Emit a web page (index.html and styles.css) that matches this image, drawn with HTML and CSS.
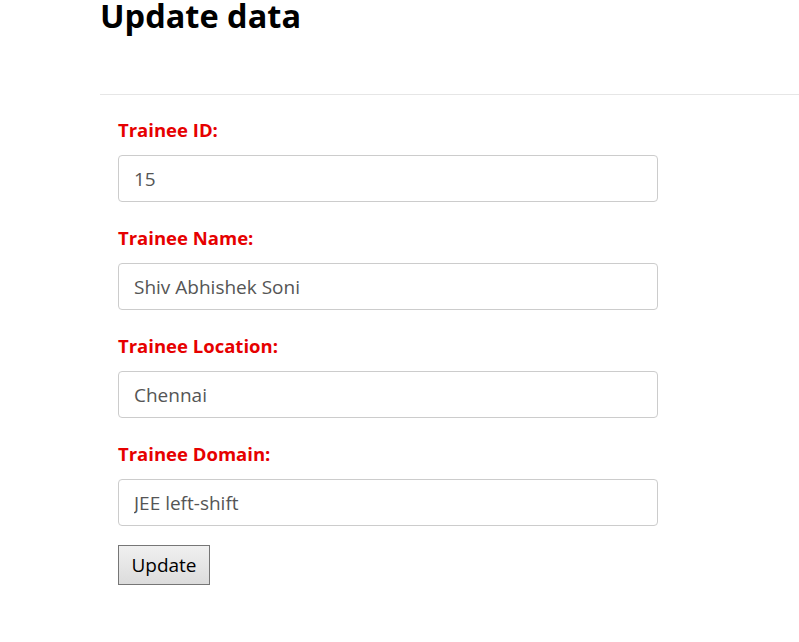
FILE: index.html
```html
<!DOCTYPE html>
<html>
<head>
<meta charset="utf-8">
<link rel="stylesheet" href="styles.css">
</head>
<body>
<div class="page">
  <h1 class="title">Update data</h1>
  <hr class="rule">
  <form class="form">
    <div class="field">
      <label class="label">Trainee ID:</label>
      <input class="input" type="text" value="15">
    </div>
    <div class="field">
      <label class="label">Trainee Name:</label>
      <input class="input" type="text" value="Shiv Abhishek Soni">
    </div>
    <div class="field">
      <label class="label">Trainee Location:</label>
      <input class="input" type="text" value="Chennai">
    </div>
    <div class="field">
      <label class="label">Trainee Domain:</label>
      <input class="input" type="text" value="JEE left-shift">
    </div>
    <button class="btn" type="button">Update</button>
  </form>
</div>
</body>
</html>
```
FILE: styles.css
```css
html, body {
  margin: 0;
  padding: 0;
  background: #fff;
}
body {
  font-family: "Open Sans", "Noto Sans", sans-serif;
  color: #000;
}
.page {
  padding-left: 100px;
}
.title {
  margin: 0;
  font-size: 32.5px;
  font-weight: 700;
  line-height: 32px;
  padding-top: 0;
}
.rule {
  margin: 62px 0 0 0;
  border: 0;
  border-top: 1px solid #e6e6e6;
  height: 0;
}
.form {
  padding: 23px 0 0 18px;
  display: flex;
  flex-direction: column;
  align-items: flex-start;
}
.field {
  display: flex;
  flex-direction: column;
  margin-bottom: 24px;
}
.label {
  color: #e60000;
  font-weight: 700;
  font-size: 18.5px;
  line-height: 24px;
  margin-bottom: 13px;
}
.input {
  box-sizing: border-box;
  width: 540px;
  height: 47px;
  border: 1px solid #cccccc;
  border-radius: 4px;
  padding: 0 15px;
  font-family: "Open Sans", "Noto Sans", sans-serif;
  font-size: 19px;
  color: #555;
  background: #fff;
  outline: none;
}
.btn {
  box-sizing: border-box;
  width: 92px;
  height: 40px;
  margin-top: -5px;
  font-family: "Open Sans", "Noto Sans", sans-serif;
  font-size: 19px;
  color: #000;
  border: 1px solid #767676;
  background: linear-gradient(#f0f0f0, #dcdcdc);
  border-radius: 0;
  padding: 0;
}
```
